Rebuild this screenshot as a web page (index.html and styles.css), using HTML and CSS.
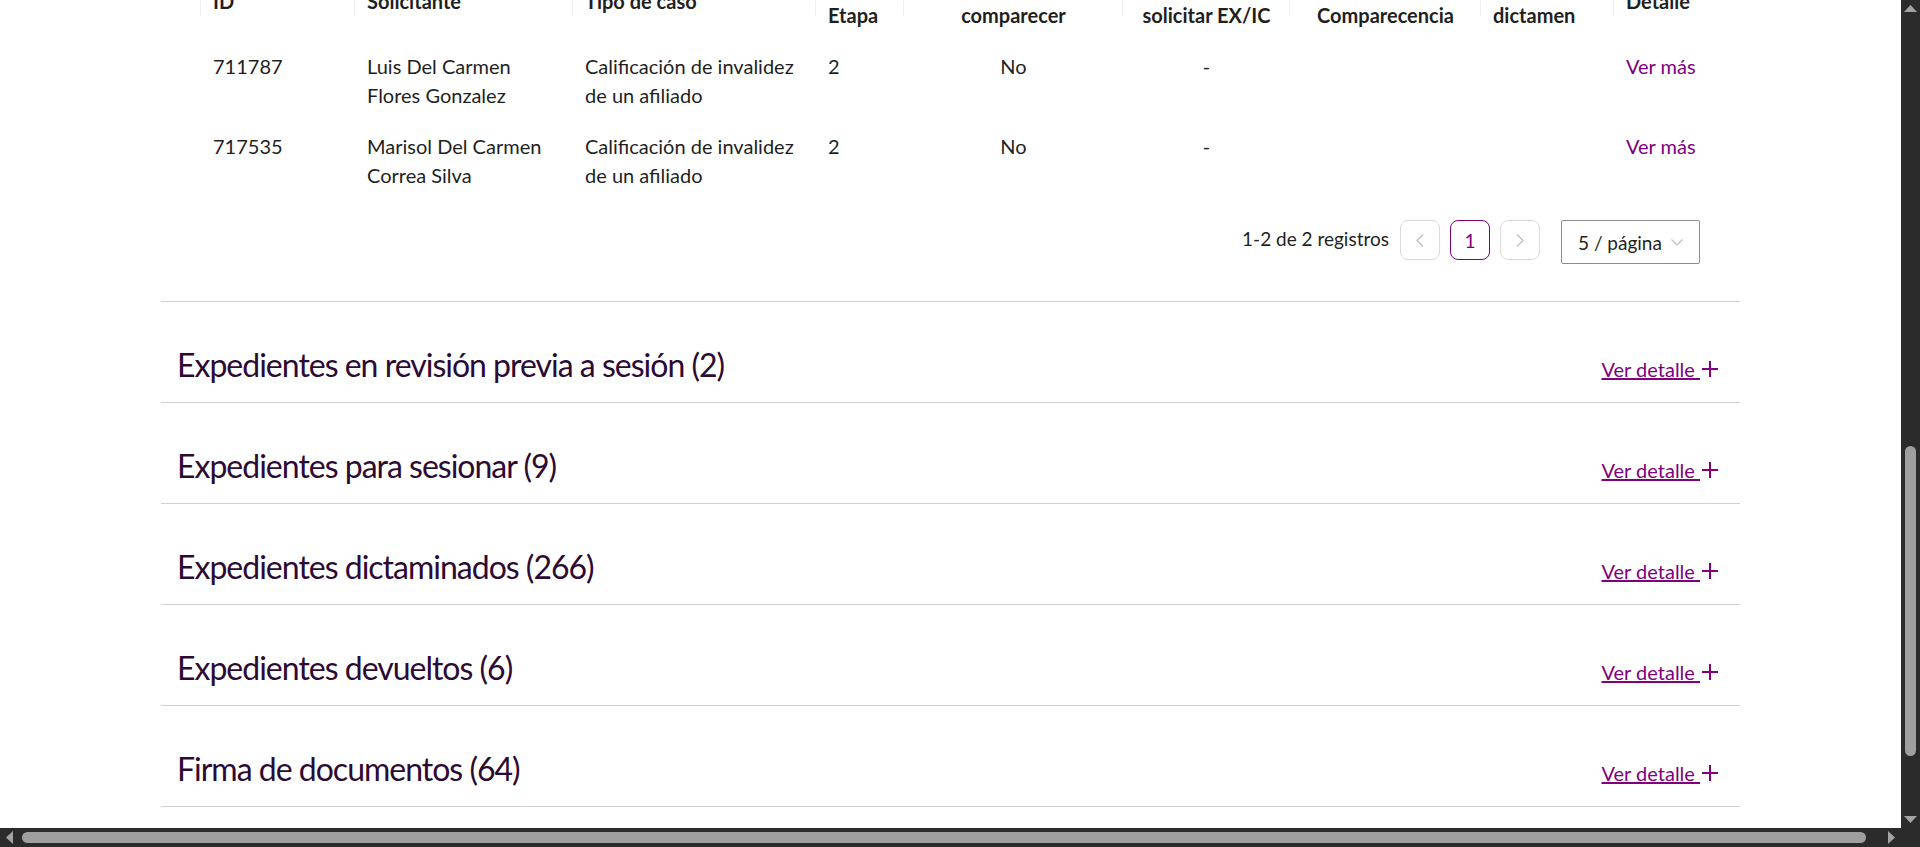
FILE: index.html
```html
<!DOCTYPE html>
<html lang="es">
<head>
<meta charset="utf-8">
<title>Expedientes</title>
<link rel="stylesheet" href="styles.css">
</head>
<body>
<div class="window">
  <main class="viewport">
    <div class="page">
      <table class="cases">
        <colgroup>
          <col class="c-sel"><col class="c-id"><col class="c-sol"><col class="c-tipo"><col class="c-etapa">
          <col class="c-cit"><col class="c-ex"><col class="c-comp"><col class="c-dict"><col class="c-det">
        </colgroup>
        <thead>
          <tr>
            <th></th>
            <th>ID</th>
            <th>Solicitante</th>
            <th>Tipo de caso</th>
            <th class="low">Etapa</th>
            <th class="low center">comparecer</th>
            <th class="low center">solicitar EX/IC</th>
            <th class="low center">Comparecencia</th>
            <th class="low">dictamen</th>
            <th>Detalle</th>
          </tr>
        </thead>
        <tbody>
          <tr>
            <td></td>
            <td>711787</td>
            <td>Luis Del Carmen Flores Gonzalez</td>
            <td>Calificación de invalidez de un afiliado</td>
            <td>2</td>
            <td class="center">No</td>
            <td class="center">-</td>
            <td class="center"></td>
            <td></td>
            <td><a class="more" href="#">Ver más</a></td>
          </tr>
          <tr>
            <td></td>
            <td>717535</td>
            <td>Marisol Del Carmen Correa Silva</td>
            <td>Calificación de invalidez de un afiliado</td>
            <td>2</td>
            <td class="center">No</td>
            <td class="center">-</td>
            <td class="center"></td>
            <td></td>
            <td><a class="more" href="#">Ver más</a></td>
          </tr>
        </tbody>
      </table>

      <div class="pagination">
        <span class="total">1-2 de 2 registros</span>
        <button class="page-btn" type="button" aria-label="Anterior">
          <svg width="8" height="13" viewBox="0 0 8 13"><path d="M7 0.5 L1 6.5 L7 12.5" fill="none" stroke="currentColor" stroke-width="1.3"/></svg>
        </button>
        <button class="page-btn active" type="button">1</button>
        <button class="page-btn" type="button" aria-label="Siguiente">
          <svg width="8" height="13" viewBox="0 0 8 13"><path d="M1 0.5 L7 6.5 L1 12.5" fill="none" stroke="currentColor" stroke-width="1.3"/></svg>
        </button>
        <div class="size-select">
          <span>5 / página</span>
          <svg width="12" height="7" viewBox="0 0 12 7"><path d="M0.5 0.5 L6 6 L11.5 0.5" fill="none" stroke="currentColor" stroke-width="1.2"/></svg>
        </div>
      </div>

      <div class="sections">
        <section class="panel">
          <div class="panel-head">
            <h2>Expedientes en revisión previa a sesión (2)</h2>
            <span class="toggle"><a href="#">Ver detalle </a><svg class="plus" width="16" height="16" viewBox="0 0 16 16"><path d="M8 0 V16 M0 8 H16" stroke="currentColor" stroke-width="2"/></svg></span>
          </div>
        </section>
        <section class="panel">
          <div class="panel-head">
            <h2>Expedientes para sesionar (9)</h2>
            <span class="toggle"><a href="#">Ver detalle </a><svg class="plus" width="16" height="16" viewBox="0 0 16 16"><path d="M8 0 V16 M0 8 H16" stroke="currentColor" stroke-width="2"/></svg></span>
          </div>
        </section>
        <section class="panel">
          <div class="panel-head">
            <h2>Expedientes dictaminados (266)</h2>
            <span class="toggle"><a href="#">Ver detalle </a><svg class="plus" width="16" height="16" viewBox="0 0 16 16"><path d="M8 0 V16 M0 8 H16" stroke="currentColor" stroke-width="2"/></svg></span>
          </div>
        </section>
        <section class="panel">
          <div class="panel-head">
            <h2>Expedientes devueltos (6)</h2>
            <span class="toggle"><a href="#">Ver detalle </a><svg class="plus" width="16" height="16" viewBox="0 0 16 16"><path d="M8 0 V16 M0 8 H16" stroke="currentColor" stroke-width="2"/></svg></span>
          </div>
        </section>
        <section class="panel">
          <div class="panel-head">
            <h2>Firma de documentos (64)</h2>
            <span class="toggle"><a href="#">Ver detalle </a><svg class="plus" width="16" height="16" viewBox="0 0 16 16"><path d="M8 0 V16 M0 8 H16" stroke="currentColor" stroke-width="2"/></svg></span>
          </div>
        </section>
      </div>
    </div>
  </main>

  <div class="vscroll">
    <svg class="arrow" width="13" height="7" viewBox="0 0 13 7"><path d="M6.5 0 L13 7 L0 7 Z"/></svg>
    <div class="vtrack"><div class="vthumb"></div></div>
    <svg class="arrow" width="13" height="7" viewBox="0 0 13 7"><path d="M0 0 L13 0 L6.5 7 Z"/></svg>
  </div>
  <div class="hscroll">
    <svg class="arrow" width="7" height="13" viewBox="0 0 7 13"><path d="M0 6.5 L7 0 L7 13 Z"/></svg>
    <div class="htrack"><div class="hthumb"></div></div>
    <svg class="arrow" width="7" height="13" viewBox="0 0 7 13"><path d="M7 6.5 L0 0 L0 13 Z"/></svg>
  </div>
  <div class="corner"></div>
</div>
</body>
</html>
```
FILE: styles.css
```css
html, body {
  margin: 0;
  padding: 0;
}

body {
  font-family: Lato, "Noto Sans", "Liberation Sans", sans-serif;
  background: #fff;
}

.window {
  display: grid;
  grid-template-columns: 1fr 19px;
  grid-template-rows: 1fr 19px;
  width: 1920px;
  height: 847px;
  overflow: hidden;
}

.viewport {
  overflow: hidden;
  background: #fff;
}

.page {
  padding: 0 161px;
}

/* table */
.cases {
  width: 100%;
  table-layout: fixed;
  border-collapse: collapse;
  margin-top: -39px;
  font-size: 20px;
  line-height: 29px;
  color: #1f1f1f;
}

.c-sel { width: 40px; }
.c-id { width: 154px; }
.c-sol { width: 218px; }
.c-tipo { width: 243px; }
.c-etapa { width: 88px; }
.c-cit { width: 219px; }
.c-ex { width: 167px; }
.c-comp { width: 191px; }
.c-dict { width: 133px; }
.c-det { width: 126px; }

.cases thead tr {
  height: 80px;
}

.cases th {
  position: relative;
  padding: 11px 12px;
  font-weight: 700;
  text-align: left;
  vertical-align: middle;
  white-space: nowrap;
}

.cases th.low {
  vertical-align: bottom;
}

.cases th:not(:last-child)::before {
  content: "";
  position: absolute;
  right: 0;
  top: 50%;
  width: 1px;
  height: 1.45em;
  transform: translateY(-50%);
  background: #f0f0f0;
}

.cases td {
  padding: 11px 12px;
  vertical-align: top;
}

.cases .center {
  text-align: center;
}

.more {
  color: #800080;
  text-decoration: none;
}

/* pagination */
.pagination {
  display: flex;
  justify-content: flex-end;
  align-items: flex-start;
  gap: 10px;
  margin: 19px 40px 37px 0;
  font-size: 19px;
  color: #1f1f1f;
}

.total {
  line-height: 38px;
  margin-right: 1px;
}

.page-btn {
  width: 40px;
  height: 40px;
  box-sizing: border-box;
  padding: 0;
  border: 1px solid #d9d9d9;
  border-radius: 8px;
  background: #fff;
  color: #bfbfbf;
  font: inherit;
  display: flex;
  align-items: center;
  justify-content: center;
}

.page-btn.active {
  border-color: #800080;
  color: #800080;
}

.size-select {
  margin-left: 11px;
  width: 139px;
  height: 44px;
  box-sizing: border-box;
  padding: 0 16px;
  border: 1px solid #8c8c8c;
  border-radius: 2px;
  display: flex;
  align-items: center;
  justify-content: space-between;
  color: #1f1f1f;
}

.size-select svg {
  color: #bfbfbf;
}

/* sections */
.sections {
  border-top: 1px solid #d0d0d0;
}

.panel {
  border-bottom: 1px solid #d0d0d0;
}

.panel-head {
  display: flex;
  justify-content: space-between;
  align-items: baseline;
  height: 100px;
  box-sizing: border-box;
  padding: 43px 22px 0 16px;
}

.panel-head h2 {
  margin: 0;
  font-size: 32px;
  font-weight: 400;
  line-height: 40px;
  letter-spacing: -1px;
  color: #2c0a33;
}

.toggle {
  font-size: 20px;
  line-height: 29px;
  color: #800080;
  white-space: nowrap;
}

.toggle a {
  color: #800080;
  text-decoration: underline;
}

.plus {
  margin-left: 2px;
  vertical-align: baseline;
}

/* scrollbars */
.vscroll,
.hscroll,
.corner {
  background: #2b2b2b;
}

.arrow {
  fill: #a3a3a3;
  flex: none;
}

.vscroll {
  display: flex;
  flex-direction: column;
  align-items: center;
  padding: 5px 0 5px;
}

.vtrack {
  flex: 1;
  width: 11px;
  padding-top: 434px;
}

.vthumb {
  width: 11px;
  height: 310px;
  border-radius: 6px;
  background: #9f9f9f;
}

.hscroll {
  display: flex;
  align-items: center;
  padding: 0 6px;
}

.htrack {
  flex: 1;
  padding: 0 22px 0 9px;
}

.hthumb {
  height: 11px;
  border-radius: 6px;
  background: #9f9f9f;
}
```
